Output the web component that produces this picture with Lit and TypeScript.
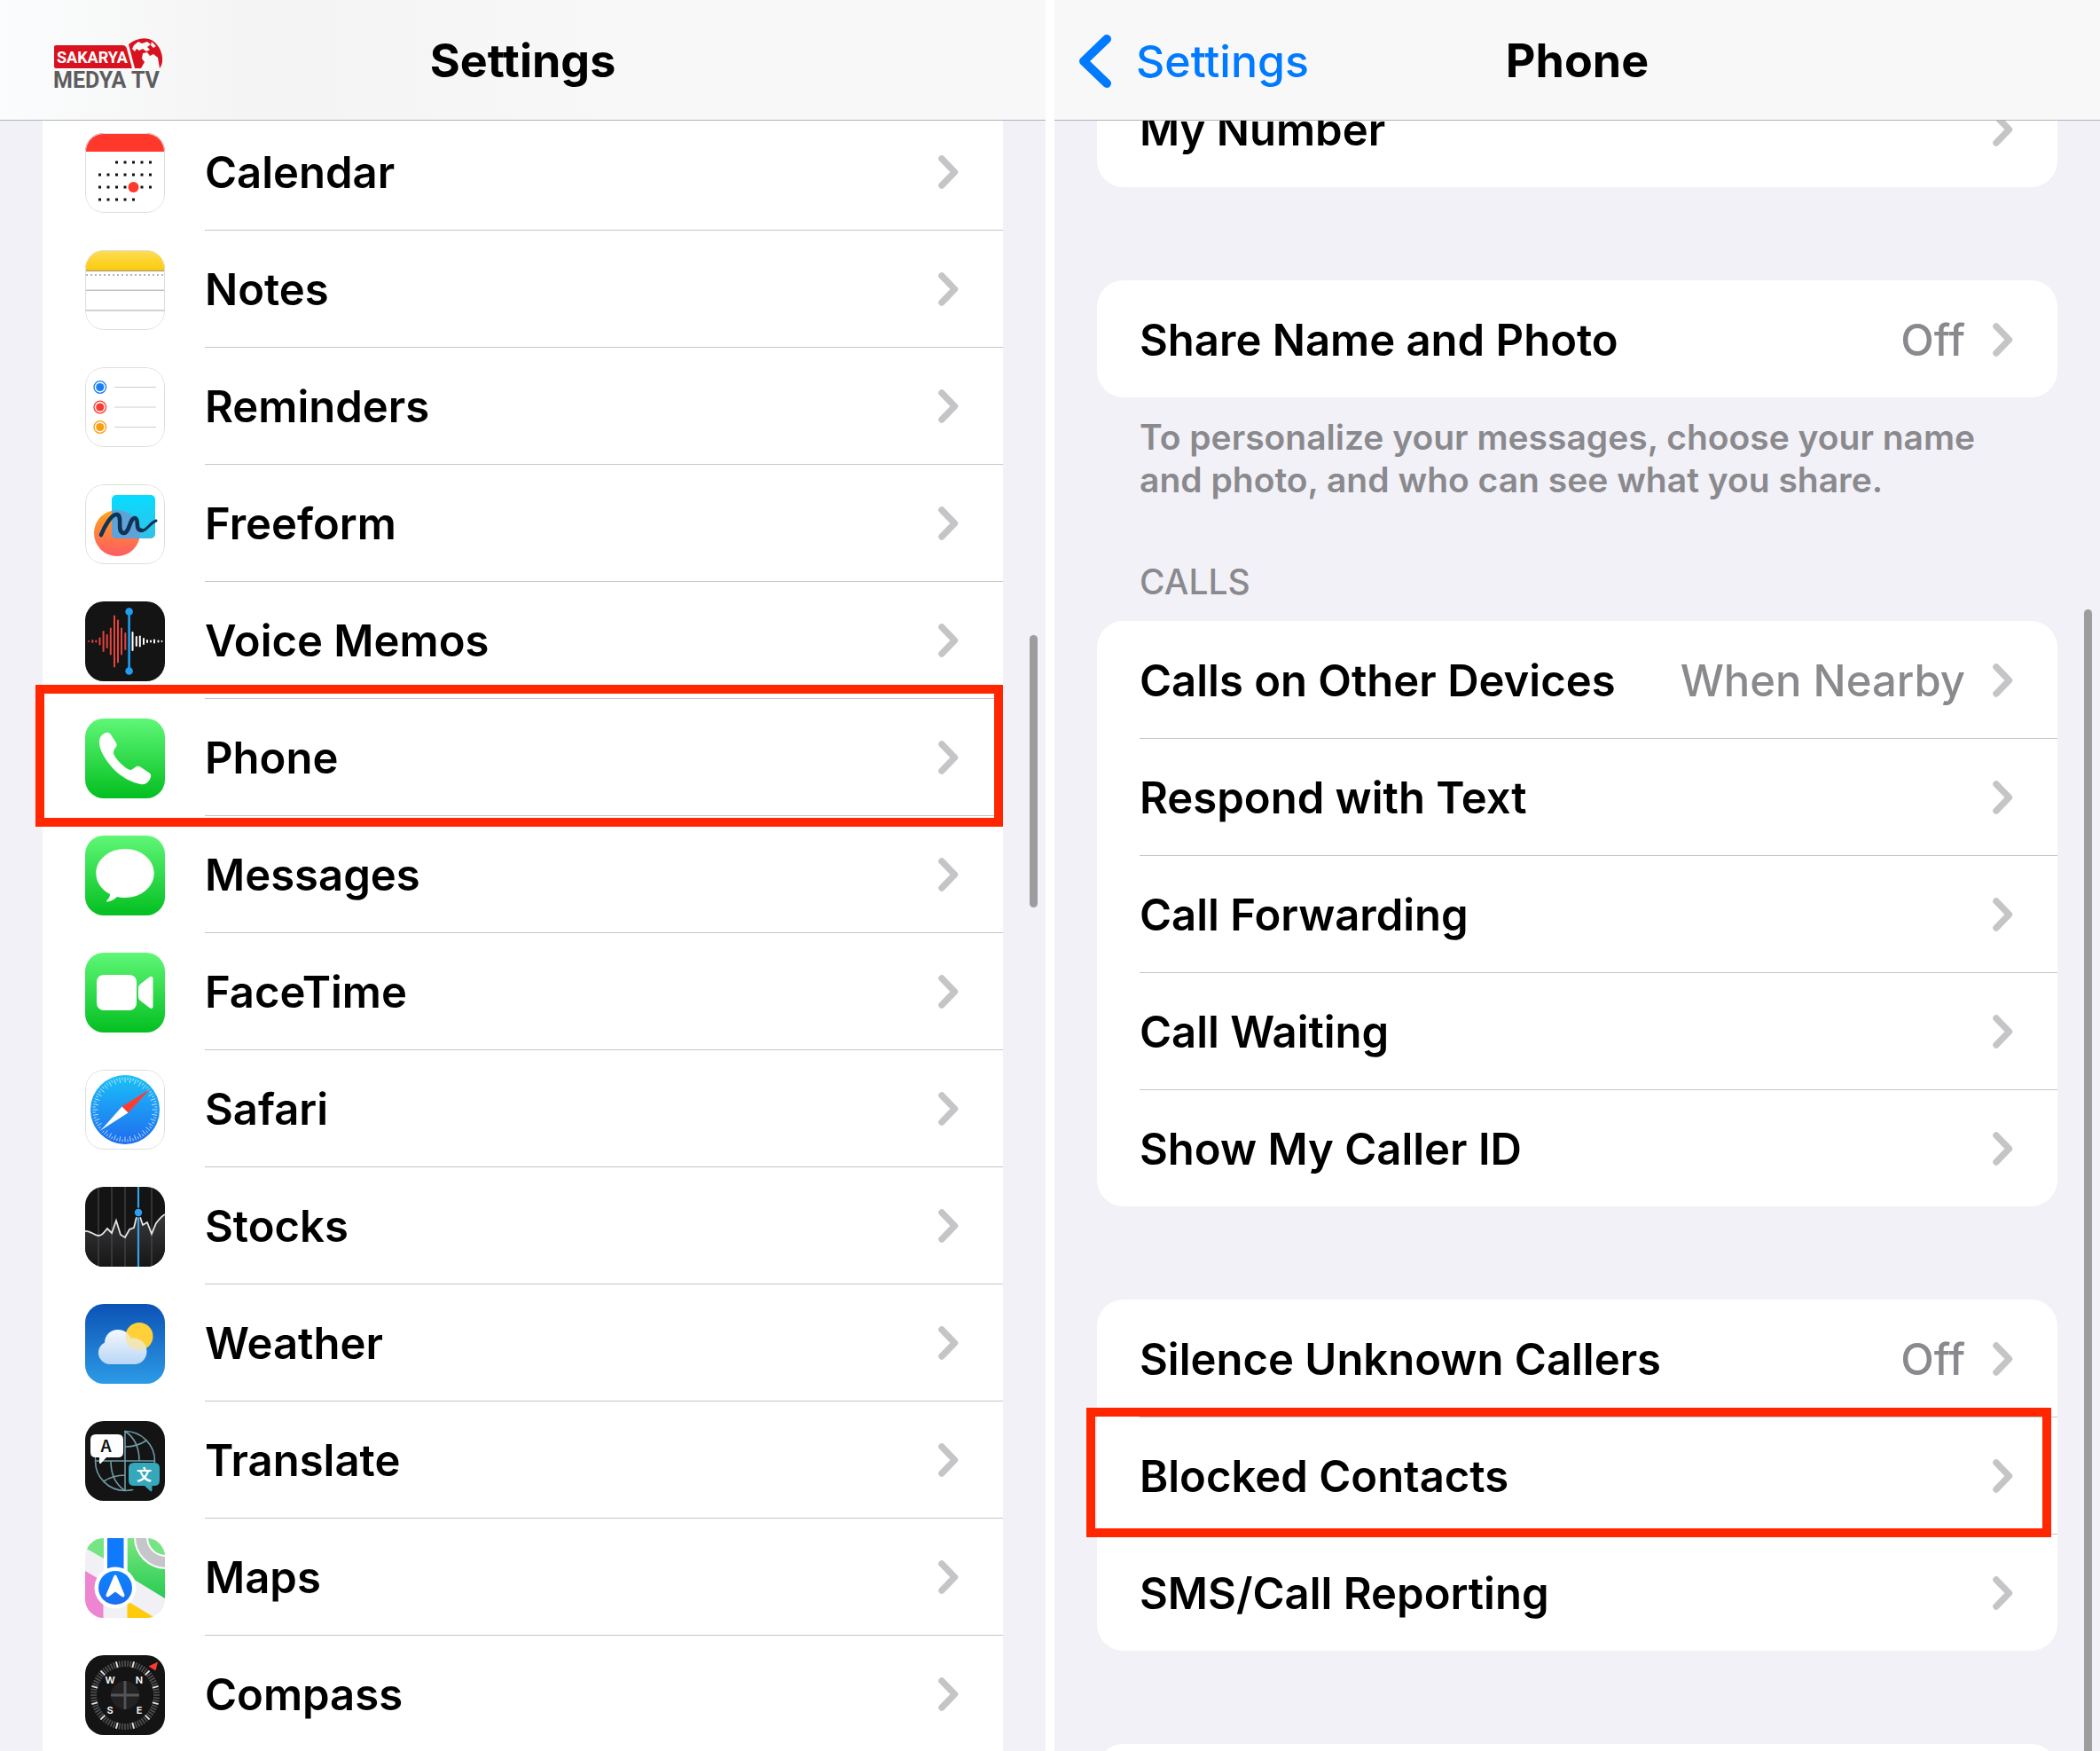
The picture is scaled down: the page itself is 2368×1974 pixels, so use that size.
import { LitElement, html, svg, css, nothing } from "lit";
import { customElement, property } from "lit/decorators.js";

type Row = { label: string; icon?: string; value?: string; mark?: string };

const APPS: Row[] = [
  { label: "Calendar", icon: "calendar" },
  { label: "Notes", icon: "notes" },
  { label: "Reminders", icon: "reminders" },
  { label: "Freeform", icon: "freeform" },
  { label: "Voice Memos", icon: "voice" },
  { label: "Phone", icon: "phone", mark: "mark-app" },
  { label: "Messages", icon: "messages" },
  { label: "FaceTime", icon: "facetime" },
  { label: "Safari", icon: "safari" },
  { label: "Stocks", icon: "stocks" },
  { label: "Weather", icon: "weather" },
  { label: "Translate", icon: "translate" },
  { label: "Maps", icon: "maps" },
  { label: "Compass", icon: "compass" },
];

const CALLS: Row[] = [
  { label: "Calls on Other Devices", value: "When Nearby" },
  { label: "Respond with Text" },
  { label: "Call Forwarding" },
  { label: "Call Waiting" },
  { label: "Show My Caller ID" },
];

const BLOCKING: Row[] = [
  { label: "Silence Unknown Callers", value: "Off" },
  { label: "Blocked Contacts", mark: "mark-contact" },
  { label: "SMS/Call Reporting" },
];

const tick = (deg: number, r1: number, r2: number, color: string, w: number) => {
  const a = (deg * Math.PI) / 180;
  const c = Math.cos(a), s = Math.sin(a);
  return svg`<line x1=${45 + r1 * c} y1=${45 + r1 * s} x2=${45 + r2 * c} y2=${45 + r2 * s} stroke=${color} stroke-width=${w}></line>`;
};

const grad = (id: string, a: string, b: string) => svg`
  <linearGradient id=${id} x1="0" y1="0" x2="0" y2="1">
    <stop offset="0" stop-color=${a}></stop><stop offset="1" stop-color=${b}></stop>
  </linearGradient>`;

const bars = (xs: [number, number][], color: string) =>
  xs.map(([x, h]) => svg`<rect x=${x - 1} y=${45 - h / 2} width="2" height=${h} rx="1" fill=${color}></rect>`);

// One calendar week: square dots from day `from` up to (not including) day `to`.
const dots = (y: number, from: number, to: number) =>
  Array.from({ length: to - from }, (_, i) => svg`<rect x=${15 + (from + i) * 9.5} y=${y - 1.5} width="3" height="3" fill="#111"></rect>`);

const green = svg`<defs>${grad("g", "#5ff777", "#03bf20")}</defs><rect width="90" height="90" fill="url(#g)"></rect>`;
const white = svg`<rect width="90" height="90" fill="#fff"></rect>`;
const black = svg`<rect width="90" height="90" fill="#141415"></rect>`;

const ICONS: Record<string, () => unknown> = {
  calendar: () => svg`${white}<rect width="90" height="21" fill="#ff382b"></rect>
    ${dots(33, 2, 7)}${dots(47, 0, 7)}${dots(61, 0, 7)}${dots(75, 0, 5)}
    <circle cx="54.5" cy="61" r="6" fill="#ff382b"></circle>`,
  notes: () => svg`${white}<defs>${grad("n", "#ffdd55", "#fccb0b")}</defs>
    <rect width="90" height="23" fill="url(#n)"></rect>
    <rect y="22.5" width="90" height="1.5" fill="#b9a666"></rect>
    <path d="M1 28H90" stroke="#b5b5b7" stroke-width="2" stroke-dasharray="2 3"></path>
    <path d="M0 45.3H90M0 68H90" stroke="#c3c3c5" stroke-width="1.4"></path>`,
  reminders: () => svg`${white}${[
      [22.5, "#1b7ef2"], [45, "#fb3b31"], [67.5, "#fb9d0c"],
    ].map(([y, c]) => svg`<circle cx="16.8" cy=${y} r="6.8" fill="none" stroke=${c} stroke-width="1.3"></circle>
      <circle cx="16.8" cy=${y} r="4.6" fill=${c}></circle>
      <path d=${`M33 ${y}H80`} stroke="#cfcfd1" stroke-width="1.2"></path>`)}`,
  freeform: () => svg`${white}<defs>${grad("f1", "#ffa31c", "#ff5b62")}${grad("f2", "#06dcfe", "#34bfe8")}
      <clipPath id="fc"><rect x="30" y="12" width="49" height="49" rx="5"></rect></clipPath></defs>
    <circle cx="36" cy="55" r="26" fill="url(#f1)"></circle>
    <rect x="30" y="12" width="49" height="49" rx="5" fill="url(#f2)"></rect>
    <circle cx="36" cy="55" r="26" fill="#5ea2d8" clip-path="url(#fc)"></circle>
    <path d="M18 57C22 47 30 33 36 34C43 36 35 53 43 55C50 56 50 38 56 38C62 39 55 52 64 52" fill="none" stroke="#0d3355" stroke-width="4.6" stroke-linecap="round"></path>
    <path d="M62 52C69 54 72 44 80 41" fill="none" stroke="#0d3355" stroke-width="3" stroke-linecap="round"></path>`,
  voice: () => svg`${black}
    ${bars([[4, 2], [8.3, 4], [12.3, 3], [16.5, 9], [20.6, 24], [24.7, 16], [28.8, 31], [33, 59], [37, 49], [41, 31], [45.3, 20]], "#e5433c")}
    ${bars([[53.5, 22], [57.8, 12], [61.8, 13], [66, 8], [70, 4], [74, 3], [78, 5], [82.5, 3], [86.5, 2]], "#fff")}
    <rect x="48.3" y="12" width="2.6" height="66" fill="#1f9df0"></rect>
    <circle cx="49.6" cy="11.5" r="4.3" fill="#1f9df0"></circle><circle cx="49.6" cy="78.5" r="4.3" fill="#1f9df0"></circle>`,
  phone: () => svg`${green}<path fill="#fff" d="M20.5 17.5C23 15.6 26.5 14.5 28.5 17.5L35 27.5C36.5 30 35.5 31.5 34 33L32 37C31 40 35.5 46 39.5 50C43.5 54 49 58.5 52 58L56.5 55C58.5 53.5 60.5 53.5 62.5 54.8L72 61C75 63 74.5 65.5 73 68.5C70.5 73 67 75 62 74C52 72 41 66 32 57C22 46 15.5 34 16 26C16.2 22 17.5 19.5 20.5 17.5Z"></path>`,
  messages: () => svg`${green}<path fill="#fff" d="M45 15C63 15 77.7 27 77.7 42.5C77.7 58 63 70 45 70C42 70 38.5 69.6 36 69C33 72 28.5 74.5 24.5 74.5C23.5 74.5 24 73.5 25 72.5C27 70.5 28 68.5 28 66C18.5 61 12.3 52.5 12.3 42.5C12.3 27 27 15 45 15Z"></path>`,
  facetime: () => svg`${green}<rect x="13" y="25" width="45" height="40" rx="8" fill="#fff"></rect>
    <path fill="#fff" d="M60 40Q60 37.5 62 35.5L72.5 27.5Q76.5 25.5 76.5 29.5V60.5Q76.5 64.5 72.5 62L62 54Q60 52.5 60 50Z"></path>`,
  safari: () => svg`${white}<defs>${grad("s", "#1bc1f8", "#1f6bef")}</defs>
    <circle cx="45" cy="45" r="39" fill="url(#s)"></circle>
    ${Array.from({ length: 72 }, (_, i) => tick(i * 5, i % 2 ? 33.5 : 30.5, 36.5, "#c8ebff", 0.9))}
    <path fill="#ff3b30" d="M73 22L48.5 48.5L41.5 41.5Z"></path>
    <path fill="#fff" d="M18 68L41.5 41.5L48.5 48.5Z"></path>`,
  stocks: () => svg`${black}<defs>${grad("k", "#3b3b3d", "#161617")}</defs>
    <path fill="url(#k)" d="M0 50C6 49 10 55 15 55C20 55 22 50 25 47L30 52L35 38L40 54L45 57L50 48L55 46L60 27L65 43L70 40L75 53L80 41L90 31V90H0Z"></path>
    <path d="M15 0V90M30 0V90M45 0V90M75 0V90" stroke="#48484a" stroke-width="1.2"></path>
    <path fill="none" stroke="#e4e4e6" stroke-width="1.8" d="M0 50C6 49 10 55 15 55C20 55 22 50 25 47L30 52L35 38L40 54L45 57L50 48L55 46L58 34M62 34L65 43L70 40L75 53L80 41C83 37 86 33 90 31"></path>
    <rect x="58.9" width="2.2" height="90" fill="#38a0e5"></rect>
    <circle cx="60" cy="29" r="5.5" fill="#141415"></circle><circle cx="60" cy="29" r="4.2" fill="#2e9ff0"></circle>`,
  weather: () => svg`<defs>${grad("w", "#0c52b6", "#2c9be6")}${grad("c", "#f4f8fe", "#b9d6f5")}
      <clipPath id="wc"><path d="M26.5 68A13 13 0 0 1 22 43.5C22 35 29 29 37 29C44 29 49 33 51.5 39C61 37 69.5 44 69.5 53.5C69.5 62 63 68 56 68Z"></path></clipPath></defs>
    <rect width="90" height="90" fill="url(#w)"></rect>
    <circle cx="61" cy="36.5" r="15.5" fill="#ffd037"></circle>
    <path fill="url(#c)" d="M26.5 68A13 13 0 0 1 22 43.5C22 35 29 29 37 29C44 29 49 33 51.5 39C61 37 69.5 44 69.5 53.5C69.5 62 63 68 56 68Z"></path>
    <circle cx="61" cy="36.5" r="15.5" fill="#f6e3a4" opacity=".8" clip-path="url(#wc)"></circle>`,
  translate: () => svg`${black}
    <g fill="none" stroke="#6f9aa5" stroke-width="1.6">
      <circle cx="45" cy="45" r="33.5"></circle>
      <path d="M45 11.5V78.5M11.5 45H78.5M45 11.5C55 18 61 30 61 45M45 78.5C35 72 29 60 29 45M45 29C54 29 63 26 69 22M45 61C36 61 27 64 21 68"></path>
    </g>
    <path fill="#141415" d="M47 47H80V80H60L47 74ZM12 12H30V10H44V43H12Z"></path>
    <path fill="#fff" d="M12 15H37Q43 15 43 21V35Q43 41 37 41H24L18 47.5Q16.5 49 16 47V41H12Q6 41 6 35V21Q6 15 12 15Z"></path>
    <path fill="#36a8bb" d="M55 47H78Q84 47 84 53V67Q84 73 78 73H75.5V78Q75 80.5 73 78.5L67 73H55Q49 73 49 67V53Q49 47 55 47Z"></path>
    <text class="ic-latin" x="23.5" y="35">A</text><text class="ic-cjk" x="66.5" y="67">文</text>`,
  maps: () => svg`<defs>${grad("m", "#7ae67f", "#27cb53")}${grad("mb", "#0c83ff", "#1b6ef0")}</defs>
    <rect width="90" height="90" fill="#f1f0f5"></rect>
    <path fill="#75e583" d="M0 0H21V23L0 11Z"></path>
    <path fill="url(#m)" d="M47.5 0H90V68L47.5 42Z"></path>
    <circle cx="91" cy="-1" r="36" fill="#fff"></circle><circle cx="91" cy="-1" r="34" fill="#c6c5ca"></circle>
    <circle cx="91" cy="-1" r="22" fill="#fff"></circle><circle cx="91" cy="-1" r="20" fill="#75e583"></circle>
    <path fill="#ee85d0" d="M0 37L20.5 49V90H0Z"></path>
    <path fill="#ffcb0a" d="M47.5 71L79 90H47.5Z"></path>
    <path fill="#fff" d="M21 0H25V40H21ZM43.5 0H47.5V40H43.5Z"></path>
    <rect x="25" width="18.5" height="40" fill="#107aff"></rect>
    <circle cx="34" cy="56" r="23.5" fill="#fff"></circle><circle cx="34" cy="56" r="19" fill="url(#mb)"></circle>
    <path fill="#fff" d="M32.5 42.5Q34 40.5 35.5 42.5L44.5 64Q44.5 67.5 41.5 66L34 60.5L26.5 66Q23.5 67.5 23.5 64Z"></path>`,
  compass: () => svg`${black}
    ${Array.from({ length: 72 }, (_, i) => tick(i * 5, 32, 39, i % 6 === 3 ? "#dcdcdc" : "#545456", i % 6 === 3 ? 2 : 1.5))}
    <circle cx="45" cy="45" r="16" fill="#222223"></circle>
    <path d="M29 45H61M45 29V61" stroke="#555557" stroke-width="2.8"></path>
    <path fill="#fb3a34" d="M82 7.5L79.5 17.5L71.5 12.5Z"></path>
    <text class="ic-rose" x="28" y="32">W</text><text class="ic-rose" x="61" y="32">N</text>
    <text class="ic-rose" x="28" y="66">S</text><text class="ic-rose" x="61" y="66">E</text>`,
};

const LIGHT_ICONS = ["calendar", "notes", "reminders", "freeform", "safari"];

@customElement("app-icon")
class AppIcon extends LitElement {
  @property() name = "";
  static styles = css`
    :host { display: block; width: 90px; height: 90px; border-radius: 21px; overflow: hidden; }
    svg { display: block; width: 90px; height: 90px; }
    .edge { fill: none; stroke: #dedee1; stroke-width: 1; }
    text { text-anchor: middle; font-family: Inter, "Liberation Sans", sans-serif; }
    .ic-latin { font-size: 18px; font-weight: 600; fill: #141415; }
    .ic-cjk { font-family: "Noto Sans CJK SC", sans-serif; font-size: 17px; font-weight: 700; fill: #fff; }
    .ic-rose { font-size: 11px; font-weight: 600; fill: #fff; }
  `;
  render() {
    return html`<svg viewBox="0 0 90 90" aria-hidden="true">
      ${ICONS[this.name]?.()}
      ${LIGHT_ICONS.includes(this.name)
        ? svg`<rect class="edge" x=".5" y=".5" width="89" height="89" rx="20.5"></rect>`
        : nothing}
    </svg>`;
  }
}

@customElement("settings-row")
class SettingsRow extends LitElement {
  @property({ attribute: false }) row!: Row;
  static styles = css`
    :host { display: block; }
    .row { position: relative; display: flex; align-items: stretch; height: 132px; padding-left: 48px; color: #000; text-decoration: none; }
    .icon { align-self: center; margin: 4px 45px 0 0; }
    .body { flex: 1; min-width: 0; display: flex; align-items: center; gap: 30px; padding-right: 48px; border-top: 1px solid #c6c6c8; }
    :host([first]) .body { border-top-color: transparent; }
    .label, .value { padding-top: 2px; white-space: nowrap; }
    .label { flex: 1; }
    .value { color: #8a8a8e; font-weight: 500; }
    .chevron { width: 26px; height: 40px; flex: none; }
    .mark { position: absolute; z-index: 2; border: 10px solid #ff2600; pointer-events: none; }
    .mark-app { top: -15px; right: 0; bottom: -13px; left: -8px; }
    .mark-contact { top: -10px; right: 7px; bottom: -4px; left: -12px; }
  `;
  render() {
    const { label, icon, value, mark } = this.row;
    return html`<a class="row" href="#">
      ${icon ? html`<app-icon class="icon" name=${icon}></app-icon>` : nothing}
      <span class="body">
        <span class="label">${label}</span>
        ${value ? html`<span class="value">${value}</span>` : nothing}
        <svg class="chevron" viewBox="0 0 26 40" aria-hidden="true">
          <path d="M5 5L19.5 20L5 35" fill="none" stroke="#c5c5c7" stroke-width="7.5" stroke-linecap="round" stroke-linejoin="round"></path>
        </svg>
      </span>
      ${mark ? html`<span class="mark ${mark}"></span>` : nothing}
    </a>`;
  }
}

@customElement("app-root")
class AppRoot extends LitElement {
  static styles = css`
    :host { display: block; font-family: Inter, "Liberation Sans", sans-serif; font-size: 49px; line-height: 60px; font-weight: 600; color: #000; }
    .screens { display: grid; grid-template-columns: 1fr 1fr; gap: 10px; height: 100vh; overflow: hidden; background: #fff; }
    .screen { position: relative; display: flex; flex-direction: column; min-width: 0; min-height: 0; background: #f2f1f7; }
    .bar { display: grid; grid-template-columns: 1fr auto 1fr; align-items: center; flex: none; height: 132px; padding: 3px 28px 0; border-bottom: 1px solid #b2b2b4; background: #f8f8f8; }
    .bar-main { background: linear-gradient(90deg, #fbfcfd, #f4f4f4 25%, #f8f8f8 60%); }
    h1 { margin: 0; font-size: 52px; line-height: 60px; font-weight: 700; }
    .logo { display: block; width: 124px; height: 68px; margin: 12px 0 0 32px; }
    .logo-top, .logo-low { font-family: Roboto, "Liberation Sans", sans-serif; font-weight: 700; }
    .logo-top { font-size: 18px; fill: #fff; }
    .logo-low { font-size: 25px; fill: #5d5c5e; }
    .back { display: flex; align-items: center; gap: 24px; color: #007aff; font-size: 50px; font-weight: 500; text-decoration: none; }
    .back svg { width: 40px; height: 62px; }
    .scroll { flex: 1; min-height: 0; overflow: hidden; padding: 0 48px; }
    .apps { margin-top: -9px; background: #fff; }
    .card { background: #fff; border-radius: 30px; }
    .number { margin-top: -57px; }
    .gap { margin-top: 105px; }
    .note { margin: 21px 48px 0; font-size: 39px; line-height: 48px; color: #8a8a8e; max-width: 980px; }
    h2 { margin: 67px 48px 20px; font-size: 39px; line-height: 48px; font-weight: 500; color: #8a8a8e; }
    .thumb { position: absolute; right: 9px; width: 9px; border-radius: 5px; background: #9d9da0; }
    .thumb-main { top: 716px; height: 307px; }
    .thumb-phone { top: 687px; bottom: -10px; }
    .rest { height: 132px; }
  `;

  private rows(list: Row[]) {
    return list.map((row, i) => html`<settings-row .row=${row} ?first=${i === 0}></settings-row>`);
  }

  render() {
    return html`<main class="screens">
      <section class="screen">
        <header class="bar bar-main">
          <svg class="logo" viewBox="0 0 124 68" role="img" aria-label="Sakarya Medya TV">
            <path d="M3 10H78Q82 10 83 14L89 36H3Q1 36 1 34V12Q1 10 3 10Z" fill="#d8131f"></path>
            <path d="M85 9C92 3 101 1 108 3C118 6 124 18 123 29Q122 34 120 36H92Z" fill="#d8131f"></path>
            <path d="M91 10L96 6L100 8L106 6L110 9L106 12L109 15L105 17L101 14L97 16L94 14L92 17L89 14ZM101 19L106 18L109 22L113 20L118 24L120 36H99L103 29L100 25ZM111 6L116 11L113 13L110 10Z" fill="#fafafa"></path>
            <text class="logo-top" x="4" y="30">SAKARYA</text>
            <text class="logo-low" x="0" y="58">MEDYA TV</text>
          </svg>
          <h1>Settings</h1>
        </header>
        <div class="scroll"><nav class="apps">${this.rows(APPS)}</nav></div>
        <div class="thumb thumb-main"></div>
      </section>
      <section class="screen">
        <header class="bar">
          <a class="back" href="#">
            <svg viewBox="0 0 40 62" aria-hidden="true"><path d="M31 6L5 31L31 56" fill="none" stroke="#007aff" stroke-width="10" stroke-linecap="round" stroke-linejoin="round"></path></svg>
            Settings
          </a>
          <h1>Phone</h1>
        </header>
        <div class="scroll">
          <div class="card number">${this.rows([{ label: "My Number" }])}</div>
          <div class="card gap">${this.rows([{ label: "Share Name and Photo", value: "Off" }])}</div>
          <p class="note">To personalize your messages, choose your name and photo, and who can see what you share.</p>
          <h2>CALLS</h2>
          <div class="card">${this.rows(CALLS)}</div>
          <div class="card gap">${this.rows(BLOCKING)}</div>
          <div class="card gap rest"></div>
        </div>
        <div class="thumb thumb-phone"></div>
      </section>
    </main>`;
  }
}
